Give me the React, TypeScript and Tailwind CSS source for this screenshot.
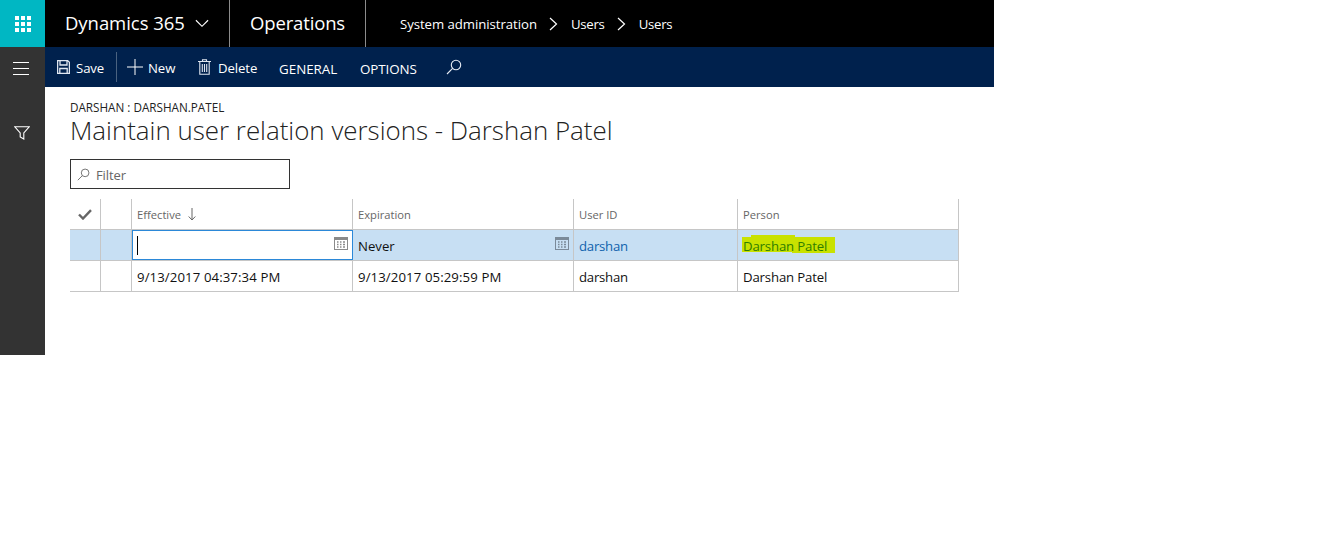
import React from "react";

const font = { fontFamily: '"Open Sans","Noto Sans",sans-serif' };

function CalendarIcon({ color = "#8a8a8a" }: { color?: string }) {
  return (
    <svg width="14" height="13" viewBox="0 0 14 13" className="block">
      <rect x="0.5" y="0.5" width="13" height="12" fill="none" stroke={color} />
      <rect x="0.5" y="0.5" width="13" height="2.5" fill={color} />
      <path d="M3 5h1.5M6 5h1.5M9 5h2M3 7.5h1.5M6 7.5h1.5M9 7.5h2M3 10h1.5M6 10h1.5M9 10h2" stroke={color} strokeWidth="1.5" />
    </svg>
  );
}

function SearchIcon({ color, size }: { color: string; size: number }) {
  return (
    <svg width={size} height={size} viewBox="0 0 16 16" fill="none" stroke={color} strokeWidth="1.1" className="block">
      <circle cx="10" cy="6" r="4.7" />
      <path d="M6.6 9.4 1 15" />
    </svg>
  );
}

function Sep() {
  return <div className="w-px h-[47px] bg-[#8c8c8c]" />;
}

function Chevron() {
  return (
    <svg width="9" height="14" viewBox="0 0 9 14" fill="none" stroke="#fff" strokeWidth="1.2" className="block">
      <path d="M1 1l6.500 6L1 13" />
    </svg>
  );
}

function Cell({ w, className = "", children }: { w: string; className?: string; children?: React.ReactNode }) {
  return <div className={`${w} shrink-0 h-full border-r border-[#c6c6c6] flex items-center relative ${className}`}>{children}</div>;
}

export default function App() {
  return (
    <div className="w-[1341px] h-[533px] bg-white overflow-hidden text-[#111]" style={font}>
      <div className="w-[994px]">
        <header className="h-[47px] bg-black flex items-center text-white">
          <div className="w-[45px] h-full bg-[#00b7c3] flex items-center justify-center">
            <div className="grid grid-cols-3 gap-[2px]">
              {Array.from({ length: 9 }).map((_, i) => (
                <div key={i} className="w-[4px] h-[4px] bg-white" />
              ))}
            </div>
          </div>
          <div className="w-[184px] pl-5 flex items-center gap-[10px]">
            <span className="text-[18.5px] tracking-[-0.05px] leading-none">Dynamics 365</span>
            <svg width="14" height="9" viewBox="0 0 15 9" fill="none" stroke="#fff" strokeWidth="1.2" className="block">
              <path d="M1 1l6.500 6.500L14 1" />
            </svg>
          </div>
          <Sep />
          <div className="w-[135px] pl-5 text-[18.5px] tracking-[-0.15px] leading-none">Operations</div>
          <Sep />
          <div className="pl-[34px] pt-[2px] flex items-center text-[13.2px] tracking-[-0.05px]">
            <span>System administration</span>
            <span className="ml-[12px] mr-[13px]"><Chevron /></span>
            <span className="tracking-[-0.25px]">Users</span>
            <span className="ml-[12px] mr-[13px]"><Chevron /></span>
            <span className="tracking-[-0.25px]">Users</span>
          </div>
        </header>
        <div className="flex">
          <aside className="w-[45px] h-[308px] bg-[#333] shrink-0 flex flex-col pl-[13px] pt-[15px]">
            <div className="flex flex-col gap-[5px]">
              <div className="w-4 h-px bg-white" />
              <div className="w-4 h-px bg-white" />
              <div className="w-4 h-px bg-white" />
            </div>
            <svg width="16" height="14" viewBox="0 0 16 14" fill="none" stroke="#fff" strokeWidth="1.1" className="block mt-[51px] ml-px">
              <path d="M0.800 0.800h14.400L9.800 7v6L6.200 11V7z" />
            </svg>
          </aside>
          <main className="flex-1 min-w-0">
            <nav className="h-10 bg-[#00214d] flex items-center text-white text-[13.2px] tracking-[-0.1px]">
              <div className="flex items-center pl-3 gap-[6px] w-[71px] h-full">
                <svg width="13" height="14" viewBox="0 0 13 14" fill="none" stroke="#dfe6f0" strokeWidth="1.3" className="block">
                  <path d="M0.600 0.600h10l1.800 1.800v11H0.600zM3 .6v4.400h7V.6M2.800 13.400V8.500h7.400v4.900" />
                </svg>
                <span className="pt-[4px]">Save</span>
              </div>
              <div className="w-px h-[30px] bg-[#4a6280]" />
              <div className="flex items-center pl-[10px] gap-[5px] w-[81px]">
                <svg width="16" height="16" viewBox="0 0 16 16" stroke="#fff" strokeWidth="1" className="block">
                  <path d="M8 0v16M0 8h16" />
                </svg>
                <span className="pt-[4px]">New</span>
              </div>
              <div className="flex items-center gap-[7px] w-[81px]">
                <svg width="13" height="16" viewBox="0 0 13 16" fill="none" stroke="#dfe6f0" strokeWidth="1.1" className="block">
                  <path d="M0 2.500h13M4.500 2.500V.7h4v1.800M1.800 2.500V15.300h9.400V2.500M4.300 5v8M6.500 5v8M8.700 5v8" />
                </svg>
                <span className="pt-[4px]">Delete</span>
              </div>
              <span className="w-[81px] pt-[4px] text-[13.4px] tracking-[-0.02px]">GENERAL</span>
              <span className="w-[86px] pt-[4px] text-[13.4px] tracking-[-0.1px]">OPTIONS</span>
              <div className="-mt-[1px]"><SearchIcon color="#e6ecf4" size={16} /></div>
            </nav>
            <div className="pl-[25px] pr-[35px]">
              <div className="pt-[13px] text-[11.7px] leading-[14px] text-[#222]">DARSHAN : DARSHAN.PATEL</div>
              <h1 className="text-[25.9px] leading-[32px] font-light text-[#222]">Maintain user relation versions - Darshan Patel</h1>
              <div className="mt-[13px] w-[220px] h-[30px] border border-[#333] flex items-center pl-[6px] gap-[6px]">
                <SearchIcon color="#666" size={13} />
                <span className="pt-[4px] text-[13px] tracking-[-0.1px] text-[#666]">Filter</span>
              </div>
              <div className="mt-[10px] w-[889px] text-[13.2px]">
                <div className="h-[31px] flex border-b border-[#c6c6c6] text-[11.200px] text-[#666]">
                  <Cell w="w-[31px]" className="justify-center">
                    <svg width="14" height="11" viewBox="0 0 14 11" fill="none" stroke="#666" strokeWidth="2.4" className="block">
                      <path d="M1 5.500l4 4L13 1.200" />
                    </svg>
                  </Cell>
                  <Cell w="w-[31px]" />
                  <Cell w="w-[221px]" className="pl-[5px] gap-[7px]">
                    <span className="pt-[2px]">Effective</span>
                    <svg width="8" height="13" viewBox="0 0 8 13" fill="none" stroke="#666" strokeWidth="1" className="block">
                      <path d="M4 0v12M.7 8.500 4 12l3.300-3.500" />
                    </svg>
                  </Cell>
                  <Cell w="w-[221px]" className="pl-[5px]"><span className="pt-[2px]">Expiration</span></Cell>
                  <Cell w="w-[164px]" className="pl-[5px]"><span className="pt-[2px]">User ID</span></Cell>
                  <Cell w="w-[221px]" className="pl-[5px]"><span className="pt-[2px]">Person</span></Cell>
                </div>
                <div className="h-[31px] flex border-b border-[#c6c6c6] bg-[#c7dff3]">
                  <Cell w="w-[31px]" />
                  <Cell w="w-[31px]" />
                  <Cell w="w-[221px]" className="bg-white outline outline-1 outline-[#2b88d8] -outline-offset-1 pl-[5px] justify-between pr-[4px]">
                    <div className="w-px h-[19px] bg-black" />
                    <span className="-mt-[4px]"><CalendarIcon /></span>
                  </Cell>
                  <Cell w="w-[221px]" className="pl-[5px] justify-between pr-[4px] text-[#111]">
                    <span className="pt-[4px]">Never</span>
                    <span className="-mt-[4px]"><CalendarIcon color="#7b8a99" /></span>
                  </Cell>
                  <Cell w="w-[164px]" className="pl-[5px] text-[#0f62ad]"><span className="pt-[4px] tracking-[-0.25px]">darshan</span></Cell>
                  <Cell w="w-[221px]" className="pl-[5px] text-[#2f7d00]">
                    <svg width="94" height="20" viewBox="0 0 94 20" className="absolute left-[4px] top-[4px] block" aria-hidden="true">
                      <path d="M0 3H9V1H53V3H93V19H50V18H0z" fill="#c9e200" />
                    </svg>
                    <span className="relative pt-[4px] tracking-[-0.15px]">Darshan Patel</span>
                  </Cell>
                </div>
                <div className="h-[31px] flex border-b border-[#c6c6c6]">
                  <Cell w="w-[31px]" />
                  <Cell w="w-[31px]" />
                  <Cell w="w-[221px]" className="pl-[5px]"><span className="pt-[3px] tracking-[0.1px]">9/13/2017 04:37:34 PM</span></Cell>
                  <Cell w="w-[221px]" className="pl-[5px]"><span className="pt-[3px] tracking-[0.1px]">9/13/2017 05:29:59 PM</span></Cell>
                  <Cell w="w-[164px]" className="pl-[5px]"><span className="pt-[3px] tracking-[-0.25px]">darshan</span></Cell>
                  <Cell w="w-[221px]" className="pl-[5px]"><span className="pt-[3px] tracking-[-0.15px]">Darshan Patel</span></Cell>
                </div>
              </div>
            </div>
          </main>
        </div>
      </div>
    </div>
  );
}
